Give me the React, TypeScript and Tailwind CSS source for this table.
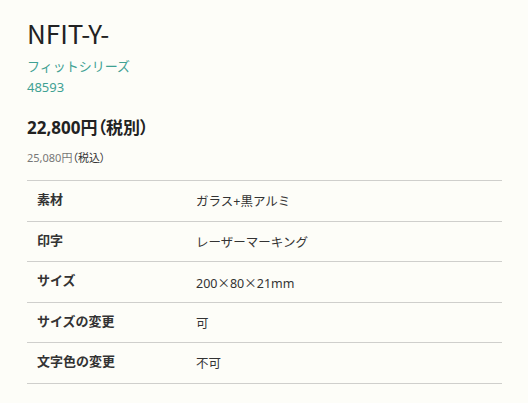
const X = () => <span className="font-['Noto_Sans_CJK_JP',sans-serif]">×</span>;

const specs = [
  { label: '素材', value: <>ガラス+黒アルミ</> },
  { label: '印字', value: <>レーザーマーキング</> },
  {
    label: 'サイズ',
    value: (
      <>
        200<X />80<X />21mm
      </>
    ),
  },
  { label: 'サイズの変更', value: <>可</> },
  { label: '文字色の変更', value: <>不可</> },
];

export default function App() {
  return (
    <div className="min-h-screen bg-[#fdfdf8] px-[27px] pt-[16px] text-[#222] font-['Noto_Sans','Noto_Sans_CJK_JP',sans-serif]">
      <h1 className="text-[26px] leading-[34px] font-normal font-['Noto_Sans_CJK_JP',sans-serif]">NFIT-Y-</h1>
      <p className="mt-[6px] text-[13px] leading-[21px] text-[#3fa193]">フィットシリーズ</p>
      <p className="text-[13px] leading-[21px] text-[#3fa193]">48593</p>

      <p className="mt-[18px] text-[17px] leading-[24px] font-bold [font-feature-settings:'palt']">
        22,800円（税別）
      </p>
      <p className="mt-[10px] text-[11px] leading-[16px] [font-feature-settings:'palt']">
        <span className="text-[#777]">25,080円</span>
        <span className="text-[#333]">（税込）</span>
      </p>

      {/* spec table */}
      <div className="mt-[14px] w-[475px] border-t border-[#cfcfcc]">
        {specs.map((row) => (
          <div key={row.label} className="flex h-[40.5px] border-b border-[#cfcfcc]">
            <div className="w-[169px] pl-[10px] pt-[10px] text-[13px] leading-[17px] font-bold text-[#333]">
              {row.label}
            </div>
            <div className="flex-1 pt-[12px] text-[12.5px] leading-[17px] text-[#333]">{row.value}</div>
          </div>
        ))}
      </div>
    </div>
  );
}
